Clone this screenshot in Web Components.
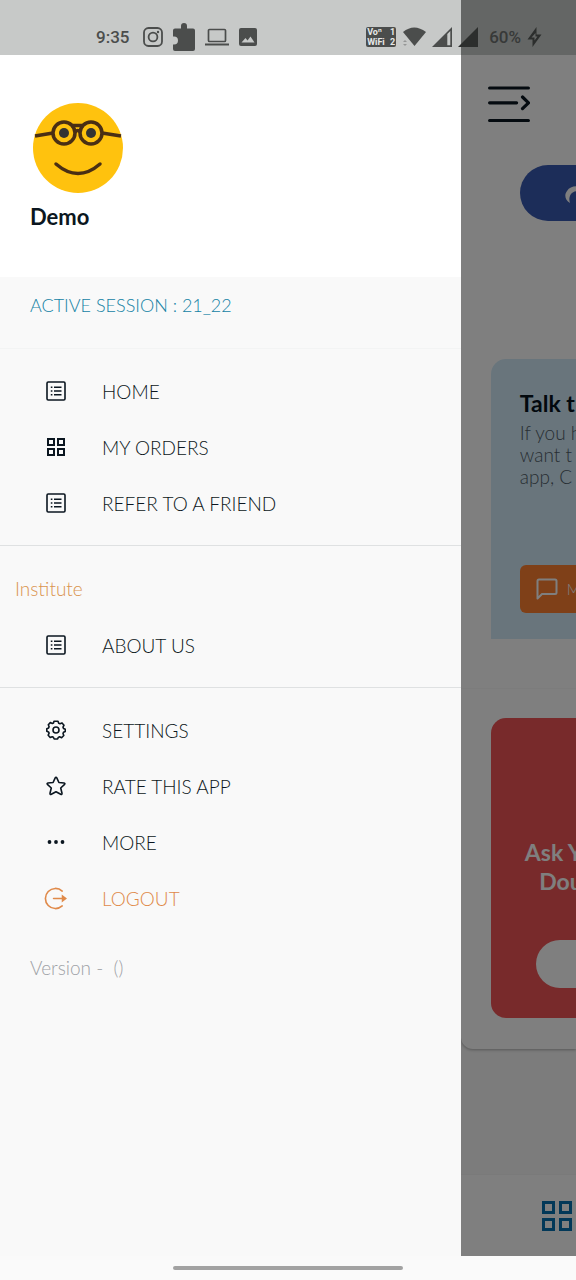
<!DOCTYPE html>
<html lang="en">
<head>
<meta charset="utf-8">
<meta name="viewport" content="width=device-width, initial-scale=1">
<title>Menu</title>
<style>
  body {
    margin: 0;
    font-family: Lato, "Liberation Sans", sans-serif;
    font-weight: 300;
    color: #0b1620;
  }
</style>
</head>
<body>
<app-shell>
  <status-bar slot="status"></status-bar>
  <side-drawer slot="drawer" name="Demo" session="21_22">
    <menu-section>
      <menu-item icon="list">HOME</menu-item>
      <menu-item icon="grid">MY ORDERS</menu-item>
      <menu-item icon="list">REFER TO A FRIEND</menu-item>
    </menu-section>
    <menu-section heading="Institute">
      <menu-item icon="list">ABOUT US</menu-item>
    </menu-section>
    <menu-section last>
      <menu-item icon="gear">SETTINGS</menu-item>
      <menu-item icon="star">RATE THIS APP</menu-item>
      <menu-item icon="dots">MORE</menu-item>
      <menu-item icon="logout" accent>LOGOUT</menu-item>
    </menu-section>
  </side-drawer>
  <home-page slot="page"></home-page>
</app-shell>

<script>
const icons = {
  list: ['0 0 20 20', `<g fill="none" stroke="currentColor" stroke-width="1.6"><rect x="1" y="1" width="18" height="18" rx="1.2"/><path d="M8 6.2h7.5M8 10h7.5M8 13.8h7.5M4.8 6.2h1.6M4.8 10h1.6M4.8 13.8h1.6" stroke-width="1.4"/></g>`],
  grid: ['0 0 20 20', `<path fill="none" stroke="currentColor" stroke-width="2" d="M2 2h6v6H2zM12 2h6v6h-6zM2 12h6v6H2zM12 12h6v6h-6z"/>`],
  gear: ['0 0 20 20', `<g fill="none" stroke="currentColor" stroke-width="1.6" stroke-linejoin="round"><path d="M8 1.2h4l.7 2 1.3.5 2-.8 2 2.3-1 2 .5 1.2 1.8.8v2.2l-1.8.8-.5 1.3.8 2-2.2 2.2-2-.9-1.3.6-.7 1.6H8.2l-.8-1.7-1.2-.6-2 .8-2-2.3.9-2-.6-1.3-1.7-.7V8.7l1.8-.7.5-1.3-.8-2 2-2.1 2 .8 1.2-.5z"/><circle cx="10" cy="10" r="3"/></g>`],
  star: ['0 0 20 20', `<path fill="none" stroke="currentColor" stroke-width="1.6" stroke-linejoin="round" d="M10 1.2q.5 0 .8.6l2.1 4.7 5.2.5q1.3.3.5 1.4l-3.9 3.6 1.3 5.3q.1 1.5-1.3 1L10 15.7l-4.7 2.6q-1.4.5-1.3-1l1.3-5.3-3.9-3.6Q.6 7.3 1.9 7l5.2-.5 2.1-4.7q.3-.6.8-.6z"/>`],
  dots: ['0 0 20 20', `<g fill="currentColor"><circle cx="3.5" cy="10" r="1.9"/><circle cx="10" cy="10" r="1.9"/><circle cx="16.5" cy="10" r="1.9"/></g>`],
  logout: ['0 0 24 24', `<g fill="none" stroke="currentColor" stroke-width="1.7" stroke-linecap="round"><path d="M19 4.200A10.500 10.500 0 1 0 19 19.800"/><path d="M10 12h12"/></g><path fill="currentColor" d="M18.500 7.800L24 12l-5.500 4.200z"/>`],
  menu: ['0 0 42 38', `<path fill="none" stroke="currentColor" stroke-width="3.2" stroke-linecap="round" stroke-linejoin="round" d="M1.600 3h38.800M1.600 17.800h27M1.600 35.500h38.800M34.500 12l6 5.800-6 5.800"/>`],
  chat: ['0 0 22 22', `<path fill="none" stroke="currentColor" stroke-width="2" stroke-linejoin="round" d="M3 1.500h16q1.500 0 1.500 1.500v11.500q0 1.500-1.500 1.500H6l-4.500 4.500V3q0-1.500 1.500-1.500z"/>`],
  swirl: ['0 0 24 24', `<path fill="currentColor" d="M6 17C1 14 0 9 3 5 7-1 16-1 22 4v5C17 4 10 4 7 8c-2 3-2 6-1 9z"/>`],
  tiles: ['0 0 32 32', `<path fill="none" stroke="currentColor" stroke-width="3" d="M2.500 2.500h10v10h-10zM19.500 2.500h10v10h-10zM2.500 19.500h10v10h-10zM19.500 19.500h10v10h-10z"/>`],
  camera: ['0 0 20 20', `<g fill="none" stroke="currentColor" stroke-width="1.8"><rect x="1" y="1" width="18" height="18" rx="4.5"/><circle cx="10" cy="10" r="4.4"/></g><circle cx="15" cy="5" r="1.2" fill="currentColor"/>`],
  puzzle: ['0 0 22 28', `<path fill="currentColor" d="M2 5.500h6V3a3 3 0 0 1 6 0v2.500h6q2 0 2 2V26q0 2-2 2H2q-2 0-2-2v-4.500h1a4 4 0 0 0 0-8H0v-6q0-2 2-2z"/>`],
  laptop: ['0 0 24 18', `<rect x="3.5" y="1.5" width="17" height="12" rx="1" fill="none" stroke="currentColor" stroke-width="1.7"/><path fill="currentColor" d="M0 15.500h24v2H0z"/>`],
  picture: ['0 0 18 18', `<path fill="currentColor" fill-rule="evenodd" d="M2 0h14q2 0 2 2v14q0 2-2 2H2q-2 0-2-2V2q0-2 2-2zM2.500 14.500h13l-4-6-3 4-2-2.500z"/>`],
  wifi: ['0 0 24 20', `<path fill="currentColor" d="M1 5Q12-4 24 5L12.500 19z"/><path fill="currentColor" opacity=".4" d="M1 15l2-2 2 2zM1 17l2 2 2-2z"/>`],
  signal: ['0 0 20 20', `<path fill="currentColor" fill-rule="evenodd" d="M20 0v20H0zM18.300 4v14.300h-3V7z"/>`],
  signalFull: ['0 0 20 20', `<path fill="currentColor" d="M20 0v20H0z"/>`],
  bolt: ['0 0 14 20', `<path fill="currentColor" fill-rule="evenodd" d="M9 0v7.500h5L5 20v-7.500H0zM8 6L4 10.500h3v3L10 9.500H8z"/>`],
};

class AppIcon extends HTMLElement {
  constructor() {
    super();
    this.attachShadow({ mode: 'open' });
  }

  connectedCallback() {
    const [box, shape] = icons[this.getAttribute('name')];
    this.shadowRoot.innerHTML = `
      <style>
        :host { display: block; flex: none; width: 20px; height: 20px; }
        svg { display: block; width: 100%; height: 100%; }
      </style>
      <svg viewBox="${box}" aria-hidden="true">${shape}</svg>
    `;
  }
}

class AppShell extends HTMLElement {
  constructor() {
    super();
    this.attachShadow({ mode: 'open' }).innerHTML = `
      <style>
        :host { display: flex; flex-direction: column; min-height: 100vh; }
        main { flex: 1; display: grid; grid-template-columns: 4fr 1fr; }
        footer {
          display: flex;
          align-items: center;
          justify-content: center;
          height: 24px;
          background: #fafafa;
        }
        footer span { width: 40%; height: 4px; border-radius: 2px; background: #a2a2a2; }
      </style>
      <slot name="status"></slot>
      <main>
        <slot name="drawer"></slot>
        <slot name="page"></slot>
      </main>
      <footer><span></span></footer>
    `;
  }
}

class StatusBar extends HTMLElement {
  constructor() {
    super();
    this.attachShadow({ mode: 'open' }).innerHTML = `
      <style>
        :host {
          display: flex;
          align-items: center;
          justify-content: space-between;
          box-sizing: border-box;
          height: 55px;
          padding: 18px 34px 0 96px;
          background: linear-gradient(90deg, #c7c9c8 80%, #646665 80%);
          color: #4b4d4c;
          font: 500 17px/20px Roboto, sans-serif;
        }
        div { display: flex; align-items: center; gap: 10px; }
        .time { margin-right: 4px; }
        .right { gap: 6px; }
        .puzzle { width: 22px; height: 28px; }
        .laptop { width: 24px; height: 18px; }
        .picture { width: 18px; height: 18px; }
        .wifi { width: 24px; }
        .full { color: #2c2e2d; }
        .battery { color: #373938; margin-left: 5px; }
        .bolt { width: 15px; color: #2c2e2d; }
        .calls {
          display: grid;
          grid-template-columns: auto auto;
          justify-content: space-between;
          width: 28px;
          padding: 0 1px;
          border-radius: 2px;
          background: #4b4d4c;
          color: #e6e8e7;
          font: 700 9px/10px Roboto, sans-serif;
        }
      </style>
      <div>
        <span class="time">9:35</span>
        <app-icon name="camera"></app-icon>
        <app-icon class="puzzle" name="puzzle"></app-icon>
        <app-icon class="laptop" name="laptop"></app-icon>
        <app-icon class="picture" name="picture"></app-icon>
      </div>
      <div class="right">
        <span class="calls"><span>Voⁿ</span><span>1</span><span>WiFi</span><span>2</span></span>
        <app-icon class="wifi" name="wifi"></app-icon>
        <app-icon name="signal"></app-icon>
        <app-icon class="full" name="signalFull"></app-icon>
        <span class="battery">60%</span>
        <app-icon class="bolt" name="bolt"></app-icon>
      </div>
    `;
  }
}

class SideDrawer extends HTMLElement {
  constructor() {
    super();
    this.attachShadow({ mode: 'open' });
  }

  connectedCallback() {
    this.shadowRoot.innerHTML = `
      <style>
        :host { display: block; background: #f9f9f9; }
        header {
          box-sizing: border-box;
          height: 222px;
          padding: 48px 30px 0;
          background: #fff;
        }
        .avatar { display: block; width: 90px; height: 90px; margin-left: 3px; }
        h1 { margin: 12px 0 0; font-size: 22px; line-height: 24px; font-weight: 700; }
        .session {
          box-sizing: border-box;
          height: 72px;
          margin: 0;
          padding: 16px 30px;
          border-bottom: 1px solid #f3f4f4;
          color: #1583a5;
          font-size: 18px;
          line-height: 24px;
        }
        .version {
          margin: 0;
          padding: 16px 30px;
          color: #9ea1a6;
          font-size: 19px;
          line-height: 24px;
          white-space: pre;
        }
      </style>
      <header>
        <svg class="avatar" viewBox="0 0 90 90" aria-hidden="true">
          <circle cx="45" cy="45" r="45" fill="#ffc20e"/>
          <g fill="none" stroke="#4a2f14" stroke-width="3.5">
            <circle cx="31" cy="30" r="11"/>
            <circle cx="58" cy="30" r="11"/>
            <path d="M2 33l18-3M69 30l19 3M38 22.500h13M42 29q3-3 5 0"/>
            <path d="M23 61q22 19 44 0" stroke-linecap="round"/>
          </g>
          <circle cx="31" cy="30" r="5" fill="#333"/>
          <circle cx="58" cy="30" r="5" fill="#333"/>
        </svg>
        <h1>${this.getAttribute('name')}</h1>
      </header>
      <p class="session">ACTIVE SESSION : ${this.getAttribute('session')}</p>
      <nav><slot></slot></nav>
      <p class="version">Version -  ()</p>
    `;
  }
}

class MenuSection extends HTMLElement {
  constructor() {
    super();
    this.attachShadow({ mode: 'open' });
  }

  connectedCallback() {
    const heading = this.getAttribute('heading');

    this.shadowRoot.innerHTML = `
      <style>
        :host { display: block; padding: 14px 0; border-bottom: 1px solid #dfe1e2; }
        :host([last]) { border-bottom: 0; }
        h2 {
          margin: 0;
          padding: 0 15px;
          color: #d9944f;
          font-size: 19px;
          line-height: 57px;
          font-weight: 300;
        }
      </style>
      ${heading ? `<h2>${heading}</h2>` : ''}
      <slot></slot>
    `;
  }
}

class MenuItem extends HTMLElement {
  constructor() {
    super();
    this.attachShadow({ mode: 'open' });
  }

  connectedCallback() {
    this.shadowRoot.innerHTML = `
      <style>
        :host { display: block; }
        :host([accent]) { color: #e08a4a; }
        a {
          display: flex;
          align-items: center;
          gap: 35px;
          height: 56px;
          padding: 0 44px;
          color: inherit;
          font-size: 19px;
          text-decoration: none;
        }
        span { display: flex; justify-content: center; width: 23px; }
        app-icon[name=logout] { width: 23px; height: 23px; }
      </style>
      <a href="#"><span><app-icon name="${this.getAttribute('icon')}"></app-icon></span><slot></slot></a>
    `;
  }
}

class HomePage extends HTMLElement {
  constructor() {
    super();
    this.attachShadow({ mode: 'open' }).innerHTML = `
      <style>
        :host {
          position: relative;
          display: flex;
          flex-direction: column;
          min-width: 0;
          overflow: hidden;
          white-space: nowrap;
          background: #f8f8f8;
        }
        /* scrim while the drawer is open */
        :host::after {
          content: "";
          position: absolute;
          inset: 0;
          background: rgba(0, 0, 0, .5);
          pointer-events: none;
        }
        button {
          display: flex;
          align-items: center;
          border: 0;
          padding: 0;
          font: inherit;
          color: #fff;
          background: none;
        }
        .sheet {
          display: flex;
          flex-direction: column;
          background: #fff;
          border-bottom-left-radius: 12px;
          box-shadow: 0 1px 3px rgba(0, 0, 0, .3);
        }
        .menu { margin: 30px 27px 0; color: #0b1620; }
        .menu app-icon { width: 42px; height: 38px; }
        .pill {
          height: 56px;
          margin: 42px 0 0 59px;
          padding-left: 44px;
          border-radius: 28px 0 0 28px;
          background: #395ab2;
        }
        .pill app-icon { width: 24px; height: 24px; margin-top: 10px; }
        .talk {
          box-sizing: border-box;
          height: 280px;
          margin: 138px 0 0 30px;
          padding: 30px 0 26px 29px;
          border-radius: 15px 0 0 0;
          background: #d2ebf9;
          display: flex;
          flex-direction: column;
        }
        h2 { margin: 0; font-size: 23px; line-height: 29px; font-weight: 700; }
        .talk h2 { color: #06121d; }
        .talk p { margin: 4px 0 auto; color: #505c66; font-size: 19px; line-height: 22px; }
        .message {
          height: 48px;
          padding-left: 16px;
          gap: 9px;
          border-radius: 6px 0 0 6px;
          background: #ff8030;
          font-size: 15px;
        }
        .message app-icon { width: 22px; height: 22px; }
        .ask {
          box-sizing: border-box;
          height: 300px;
          margin: 29px 0 31px 30px;
          padding: 120px 0 30px 34px;
          border-radius: 15px 0 0 15px;
          background: #f05456;
          color: #fff;
          display: flex;
          flex-direction: column;
          justify-content: space-between;
          align-items: flex-start;
        }
        .ask h2 { text-align: right; }
        .ask button {
          align-self: stretch;
          height: 48px;
          margin-left: 11px;
          border-radius: 24px 0 0 24px;
          background: #fff;
        }
        hr { width: 100%; height: 1px; margin: 49px 0 0; border: 0; background: #f8f8f8; }
        footer {
          display: flex;
          justify-content: flex-end;
          align-items: center;
          height: 81px;
          margin-top: auto;
          padding: 0 3px;
          background: #fff;
          border-top: 1px solid #f4f4f4;
        }
        footer button { color: #0571b0; }
        footer app-icon { width: 32px; height: 32px; }
      </style>
      <div class="sheet">
        <button class="menu" aria-label="Menu"><app-icon name="menu"></app-icon></button>
        <button class="pill" aria-label="Open"><app-icon name="swirl"></app-icon></button>
        <section class="talk">
          <h2>Talk t</h2>
          <p>If you h<br>want t<br>app, C</p>
          <button class="message"><app-icon name="chat"></app-icon>M</button>
        </section>
        <hr>
        <section class="ask">
          <h2>Ask Y<br>Dou</h2>
          <button aria-label="Ask"></button>
        </section>
      </div>
      <footer><button aria-label="Dashboard"><app-icon name="tiles"></app-icon></button></footer>
    `;
  }
}

customElements.define('app-icon', AppIcon);
customElements.define('app-shell', AppShell);
customElements.define('status-bar', StatusBar);
customElements.define('menu-item', MenuItem);
customElements.define('menu-section', MenuSection);
customElements.define('side-drawer', SideDrawer);
customElements.define('home-page', HomePage);
</script>
</body>
</html>
